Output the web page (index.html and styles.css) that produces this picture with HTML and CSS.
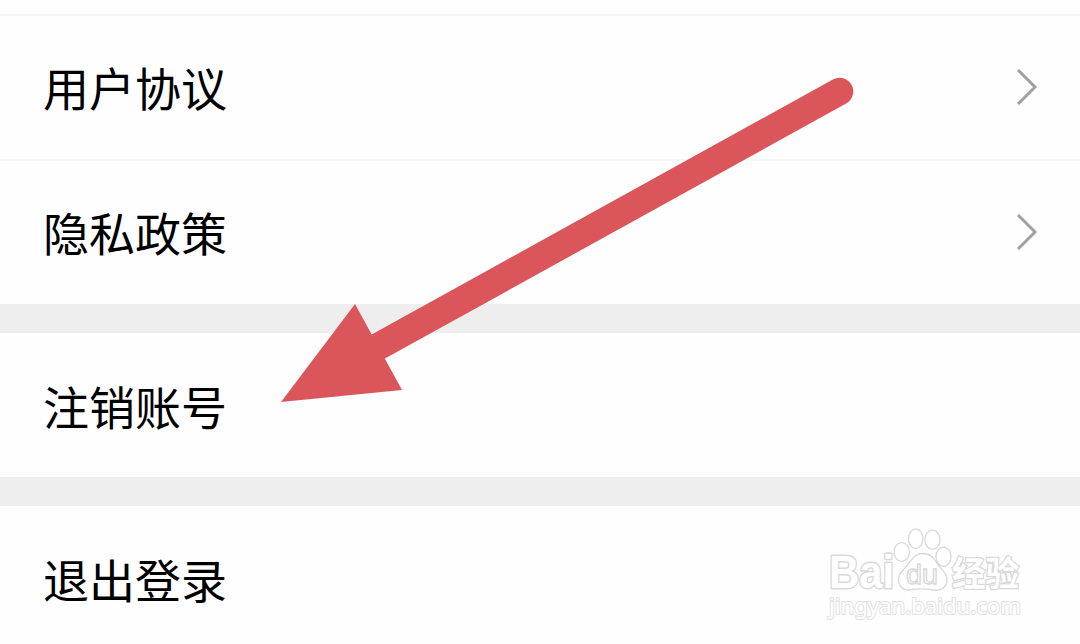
FILE: index.html
```html
<!DOCTYPE html>
<html lang="zh-CN">
<head>
  <meta charset="UTF-8">
  <meta name="viewport" content="width=device-width, initial-scale=1.0">
  <title>设置</title>
  <link rel="stylesheet" href="styles.css">
</head>
<body>
  <main class="settings">
    <section class="group">
      <a class="row">
        <span class="label">用户协议</span>
        <svg class="chevron" viewBox="0 0 22 38"><path d="M2 2 L19 19 L2 36"/></svg>
      </a>
      <a class="row">
        <span class="label">隐私政策</span>
        <svg class="chevron" viewBox="0 0 22 38"><path d="M2 2 L19 19 L2 36"/></svg>
      </a>
    </section>
    <section class="group">
      <a class="row"><span class="label">注销账号</span></a>
    </section>
    <section class="group">
      <a class="row"><span class="label">退出登录</span></a>
    </section>
  </main>

  <svg class="arrow" viewBox="0 0 1080 644">
    <path d="M839.500 91.500 L372 350" stroke="#db565b" stroke-width="27.500" stroke-linecap="round"/>
    <path d="M281 402 L355 304 L402 390 Z" fill="#db565b"/>
  </svg>

  <svg class="watermark" viewBox="0 0 220 110">
    <text class="brand" x="8" y="66" textLength="65" lengthAdjust="spacingAndGlyphs">Bai</text>
    <ellipse cx="80.700" cy="30" rx="7.700" ry="9.300"/>
    <ellipse cx="94.700" cy="16.700" rx="7.200" ry="9.800"/>
    <ellipse cx="111.500" cy="17.700" rx="7.500" ry="9.600"/>
    <ellipse cx="122.500" cy="34.700" rx="7.500" ry="9.600"/>
    <path d="M101.500 31.500 C92 31.500 90 40 84 46 C79 51 76 55 78 61 C80 67 85 69 91 67.500 C98 66.500 105 66.500 112 68 C119 69 124 67 126 60 C127 53 122 49 118 44 C113 37 111 31.500 101.500 31.500 Z"/>
    <text class="du" x="85" y="61.500" textLength="32" lengthAdjust="spacingAndGlyphs">du</text>
    <text class="brand-cn" x="131" y="63.500" textLength="67" lengthAdjust="spacingAndGlyphs">经验</text>
    <text class="site" x="8" y="92" textLength="192" lengthAdjust="spacingAndGlyphs">jingyan.baidu.com</text>
  </svg>
</body>
</html>
```

FILE: styles.css
```css
body {
  margin: 0;
  height: 644px;
  overflow: hidden;
  position: relative;
  background: #fff;
  color: #000;
  font-family: "Noto Sans CJK SC", "Noto Sans", sans-serif;
}

.settings {
  display: flex;
  flex-direction: column;
  gap: 29px;
  background: #eee;
}

.group {
  background: #fefefe;
}

.group:first-child {
  padding-top: 14px;
}

.row {
  display: flex;
  align-items: center;
  justify-content: space-between;
  box-sizing: border-box;
  height: 144px;
  padding: 0 42px 0 43px;
}

.group:first-child .row {
  height: 145px;
  padding-bottom: 3px;
  border-top: 2px solid #f6f6f6;
}

.label {
  font-size: 46px;
  line-height: 68px;
}

.chevron {
  width: 22px;
  height: 38px;
  margin-top: 2px;
  fill: none;
  stroke: #a0a0a0;
  stroke-width: 3;
}

.arrow {
  position: absolute;
  top: 0;
  left: 0;
  width: 1080px;
  height: 644px;
  fill: none;
}

/* outlined stamp in the corner */
.watermark {
  position: absolute;
  left: 821px;
  top: 522px;
  width: 220px;
  height: 110px;
  font-family: "Liberation Sans", sans-serif;
  fill: #fff;
  stroke: #d9d9d9;
  stroke-width: 1.3;
}

.brand {
  font-size: 46px;
  font-weight: bold;
  stroke-width: 3;
  stroke-linejoin: round;
  paint-order: stroke;
}

.brand-cn {
  font-family: "Noto Sans CJK SC", sans-serif;
  font-size: 34px;
  font-weight: bold;
  stroke-width: 2.5;
  paint-order: stroke;
}

.site {
  font-family: "Noto Sans", sans-serif;
  font-size: 22px;
  stroke: #e2e2e2;
  stroke-width: 2;
  paint-order: stroke;
}

.du {
  font-size: 27px;
}
```
